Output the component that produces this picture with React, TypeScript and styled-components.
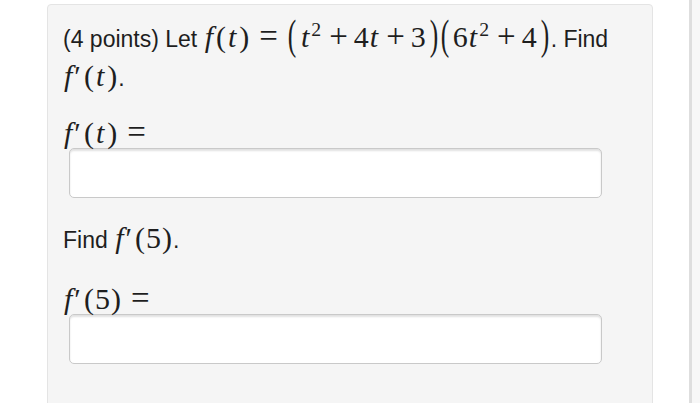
import React from 'react';
import styled, {createGlobalStyle} from 'styled-components';

const GlobalStyle = createGlobalStyle`
  html, body {
    margin: 0;
    padding: 0;
    background: #ffffff;
  }
`;

/**
 * * Page layout
 */
const Page = styled.div`
  display: flex;
  align-items: flex-start;
  height: 403px;
  overflow: hidden;
  padding: 4px 0 0 47px;
  box-sizing: border-box;
`;

const Card = styled.div`
  width: 606px;
  min-height: 420px;
  box-sizing: border-box;
  padding: 14px 0 0 15px;
  background: #f5f5f5;
  border: 1px solid #e4e4e4;
  border-radius: 4px;
  font-family: 'Liberation Sans', Arial, sans-serif;
  font-size: 23px;
  color: #1e1e1e;
`;

const NextCard = styled.div`
  flex: 1;
  margin-left: 36px;
  margin-top: -4px;
  height: 420px;
  background: #f7f7f7;
  border-left: 3px solid #dedede;
`;

const Para = styled.p<{$top?: number}>`
  margin: ${(p) => p.$top ?? 0}px 0 0;
  line-height: 36px;
`;

const Label = styled.div<{$top: number}>`
  margin-top: ${(p) => p.$top}px;
  line-height: 30px;
  margin-bottom: -2px;
`;

const AnswerBox = styled.input`
  display: block;
  width: 533px;
  height: 50px;
  margin-left: 6px;
  box-sizing: border-box;
  background: #ffffff;
  border: 1px solid #c9c9c9;
  border-radius: 5px;
  box-shadow: inset 0 2px 2px rgba(0, 0, 0, 0.12);
  outline: none;
`;

/**
 * * Math pieces
 */
const M = styled.span`
  font-family: 'Liberation Serif', 'Times New Roman', serif;
  font-size: 30px;
  white-space: nowrap;
`;

const V = styled.i`
  font-style: italic;
  padding: 0 2px 0 1px;
`;

const P = styled.span`
  margin: 0 1px;
`;

const Op = styled.span<{$wide?: boolean}>`
  font-size: 1.1em;
  line-height: 0;
  margin: 0 ${(p) => (p.$wide ? 9 : 6)}px;
`;

const Sup = styled.sup`
  font-size: 0.66em;
  vertical-align: 0;
  position: relative;
  top: -0.55em;
  margin: 0 2px 0 0;
`;

const Big = styled.span<{$open?: boolean}>`
  display: inline-block;
  transform: scale(0.85, 1.4);
  transform-origin: 50% 62%;
  margin: ${(p) => (p.$open ? '0 3px 0 0' : '0 1px 0 3px')};
`;

const Prime = styled.span`
  margin: 0 2px 0 0;
`;

const FPrime = ({arg, italic}: {arg: string; italic?: boolean}) => (
  <>
    <V>f</V>
    <Prime>′</Prime>
    <P>(</P>
    {italic ? <V>{arg}</V> : arg}
    <P>)</P>
  </>
);

const App = () => {
  return (
    <>
      <GlobalStyle />
      <Page>
        <Card>
          <Para>
            (4 points) Let{' '}
            <M>
              <V>f</V>
              <P>(</P>
              <V>t</V>
              <P>)</P>
              <Op $wide>=</Op>
              <Big $open>(</Big>
              <V>t</V>
              <Sup>2</Sup>
              <Op>+</Op>4<V>t</V>
              <Op>+</Op>3<Big>)</Big>
              <Big $open>(</Big>6<V>t</V>
              <Sup>2</Sup>
              <Op>+</Op>4<Big>)</Big>
            </M>
            . Find
            <br />
            <M>
              <FPrime arg="t" italic />
            </M>
            .
          </Para>
          <Label $top={22}>
            <M>
              <FPrime arg="t" italic />
              <Op $wide>=</Op>
            </M>
          </Label>
          <AnswerBox type="text" aria-label="f'(t)" />
          <Para $top={22}>
            Find{' '}
            <M>
              <FPrime arg="5" />
            </M>
            .
          </Para>
          <Label $top={26}>
            <M>
              <FPrime arg="5" />
              <Op $wide>=</Op>
            </M>
          </Label>
          <AnswerBox type="text" aria-label="f'(5)" />
        </Card>
        <NextCard />
      </Page>
    </>
  );
};

export default App;
